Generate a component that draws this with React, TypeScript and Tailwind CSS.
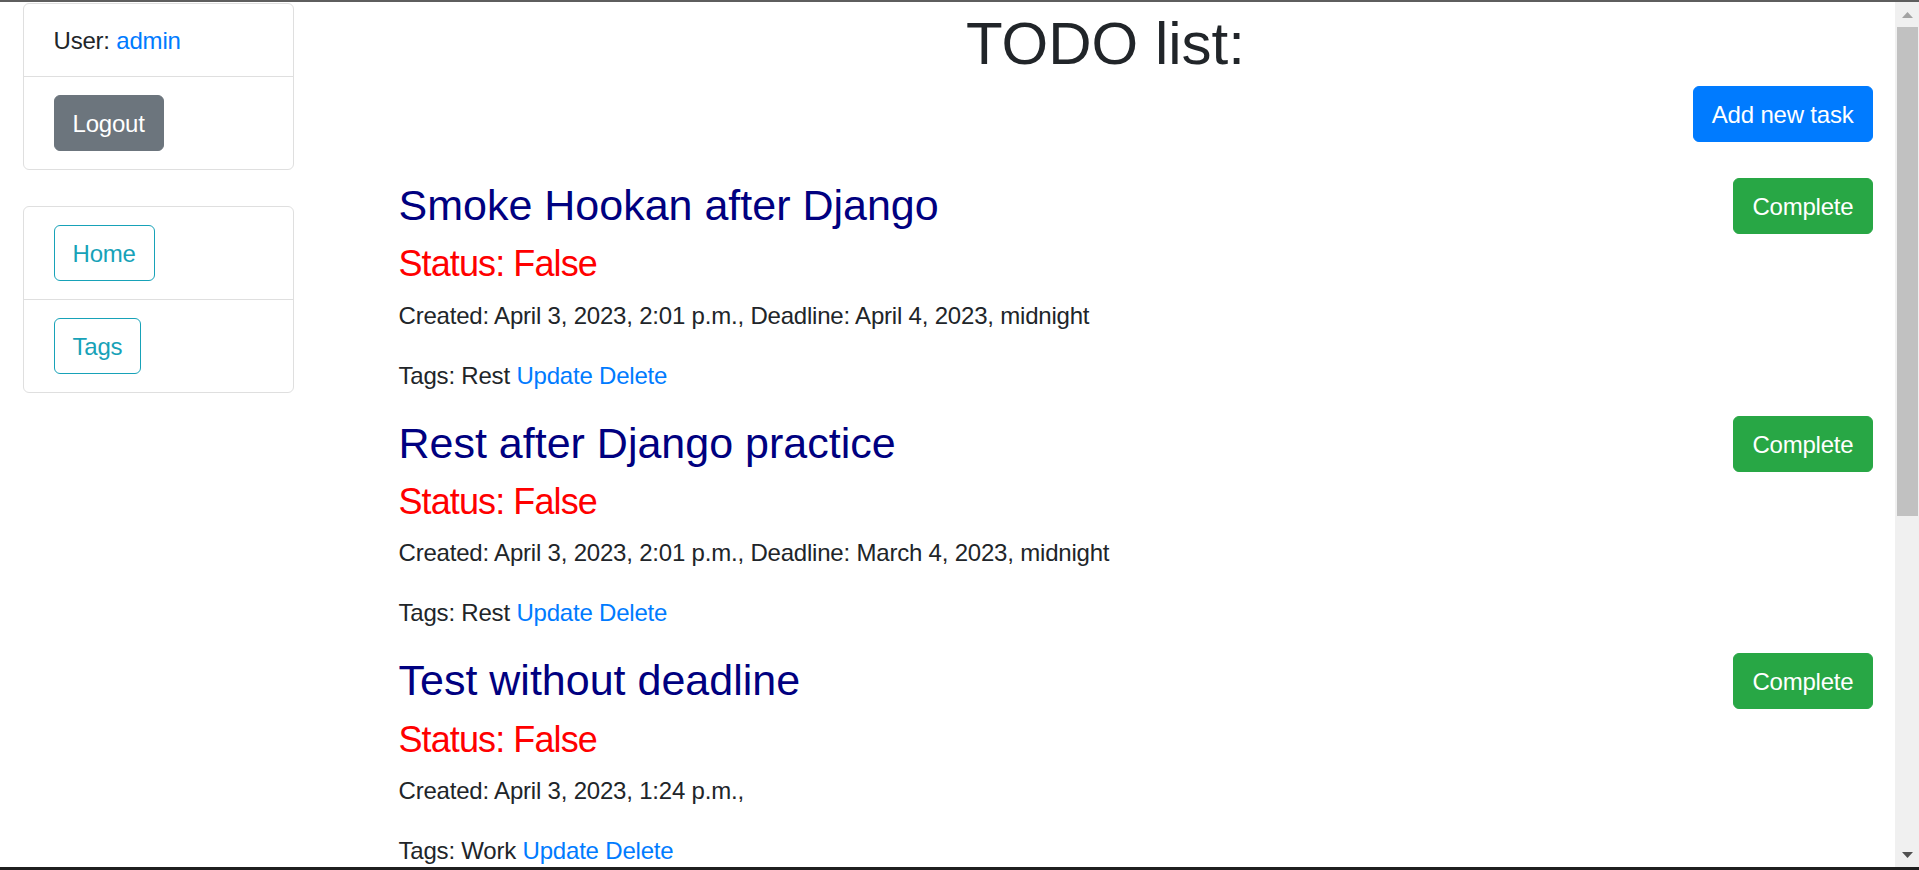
import React from "react";

type Task = {
  title: string;
  created: string;
  tag: string;
};

const tasks: Task[] = [
  {
    title: "Smoke Hookan after Django",
    created: "Created: April 3, 2023, 2:01 p.m., Deadline: April 4, 2023, midnight",
    tag: "Rest",
  },
  {
    title: "Rest after Django practice",
    created: "Created: April 3, 2023, 2:01 p.m., Deadline: March 4, 2023, midnight",
    tag: "Rest",
  },
  {
    title: "Test without deadline",
    created: "Created: April 3, 2023, 1:24 p.m.,",
    tag: "Work",
  },
];

const btn =
  "shrink-0 rounded-[6px] border px-[18px] pt-[10px] pb-[8px] text-[24px] leading-[36px]";

function TaskItem({ task }: { task: Task }) {
  return (
    <li className="flex items-start justify-between">
      <div>
        <h3 className="pt-[2px] mb-[10px] text-[43px] leading-[50.4px] text-[#000080] tracking-normal">
          <a href="#">{task.title}</a>
        </h3>
        <h4 className="pt-[2px] mb-[10px] text-[36px] leading-[43.2px] tracking-[-0.9px] text-[#ff0000]">
          Status: False
        </h4>
        <p className="pt-[2px] mb-[22px]">{task.created}</p>
        <p className="pt-[2px] mb-[22px]">
          Tags: {task.tag}{" "}
          <a href="#" className="text-[#007bff]">Update</a>{" "}
          <a href="#" className="text-[#007bff]">Delete</a>
        </p>
      </div>
      <button className={`${btn} border-[#28a745] bg-[#28a745] text-white`}>Complete</button>
    </li>
  );
}

export default function App() {
  return (
    <div className="flex h-[870px] w-[1919px] flex-col overflow-hidden bg-white font-['Liberation_Sans',Arial,sans-serif]">
      <div className="h-[2px] shrink-0 bg-[#5e5e5e]" />
      <div className="flex min-h-0 flex-1">
        <div className="flex min-w-0 flex-1 overflow-hidden text-[24px] leading-[36px] tracking-[-0.2px] text-[#212529]">
          {/* Sidebar */}
          <div className="w-[316px] shrink-0 px-[22.5px]">
            <div className="mt-[1px] rounded-[6px] border border-[#dfdfdf]">
              <div className="border-b border-[#dfdfdf] px-[30px] pt-[19px] pb-[17px]">
                User: <a href="#" className="text-[#007bff]">admin</a>
              </div>
              <div className="px-[30px] py-[18px]">
                <button className={`${btn} border-[#6c757d] bg-[#6c757d] text-white`}>Logout</button>
              </div>
            </div>
            <div className="mt-[36px] rounded-[6px] border border-[#dfdfdf]">
              <div className="border-b border-[#dfdfdf] px-[30px] py-[18px]">
                <button className={`${btn} border-[#17a2b8] bg-white text-[#17a2b8]`}>Home</button>
              </div>
              <div className="px-[30px] py-[18px]">
                <button className={`${btn} border-[#17a2b8] bg-white text-[#17a2b8]`}>Tags</button>
              </div>
            </div>
          </div>

          {/* Content */}
          <div className="min-w-0 flex-1 px-[22.5px]">
            <h1 className="pt-[6px] mb-[6px] text-center text-[60px] leading-[72px] tracking-normal">
              TODO list:
            </h1>
            <div className="mb-[36px] flex justify-end">
              <button className={`${btn} border-[#007bff] bg-[#007bff] text-white`}>Add new task</button>
            </div>
            <ul className="pl-[60px]">
              {tasks.map((t) => (
                <TaskItem key={t.title} task={t} />
              ))}
            </ul>
          </div>
        </div>

        {/* Scrollbar */}
        <div className="flex w-[24px] shrink-0 flex-col bg-[#f0f0f0]">
          <div className="flex h-[25px] items-center justify-center">
            <svg width="11" height="6" viewBox="0 0 11 6">
              <polygon points="0,6 11,6 5.5,0" fill="#a3a3a3" />
            </svg>
          </div>
          <div className="ml-[2px] h-[489px] w-[21px] bg-[#c1c1c1]" />
          <div className="flex-1" />
          <div className="flex h-[25px] items-center justify-center">
            <svg width="11" height="6" viewBox="0 0 11 6">
              <polygon points="0,0 11,0 5.5,6" fill="#505050" />
            </svg>
          </div>
        </div>
      </div>
      <div className="h-[3px] shrink-0 bg-[#1f1f1f]" />
    </div>
  );
}
